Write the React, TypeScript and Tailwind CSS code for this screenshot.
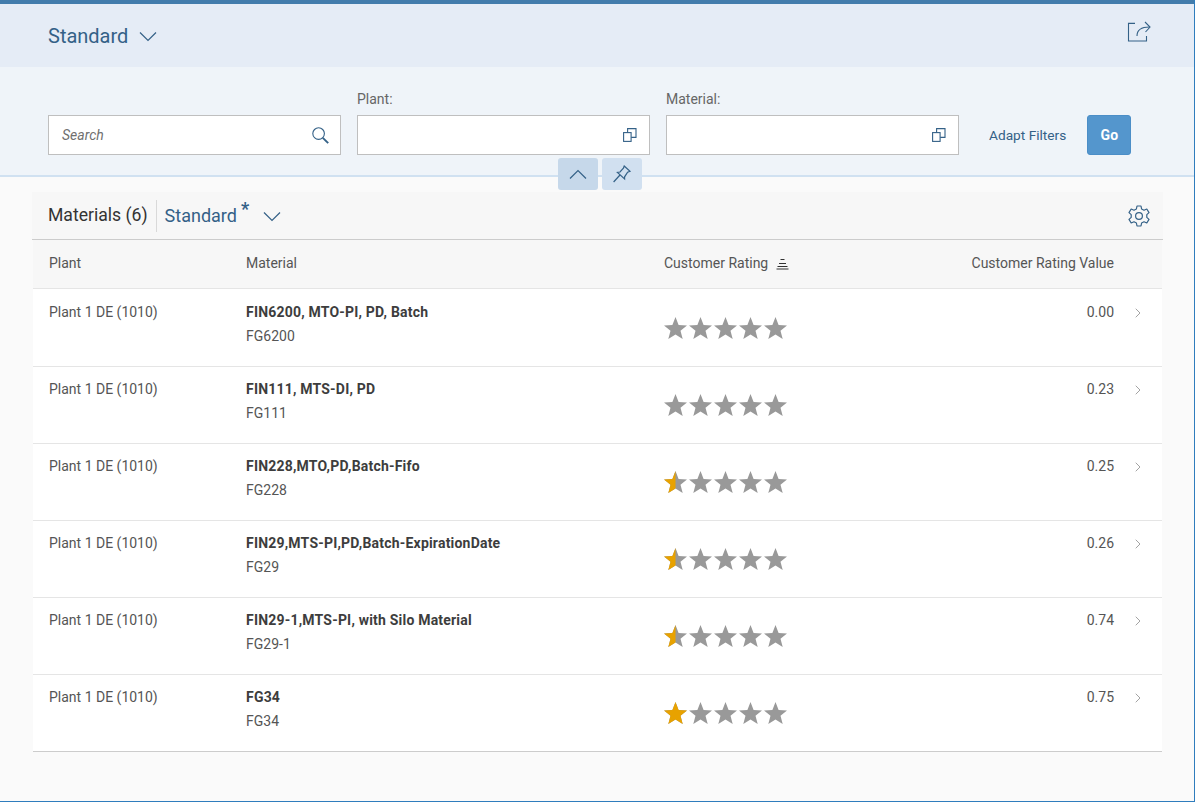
import { ChevronRight } from "lucide-react";

const rows = [
  { name: "FIN6200, MTO-PI, PD, Batch", id: "FG6200", value: "0.00", fill: 0 },
  { name: "FIN111, MTS-DI, PD", id: "FG111", value: "0.23", fill: 0 },
  { name: "FIN228,MTO,PD,Batch-Fifo", id: "FG228", value: "0.25", fill: 0.5 },
  { name: "FIN29,MTS-PI,PD,Batch-ExpirationDate", id: "FG29", value: "0.26", fill: 0.5 },
  { name: "FIN29-1,MTS-PI, with Silo Material", id: "FG29-1", value: "0.74", fill: 0.5 },
  { name: "FG34", id: "FG34", value: "0.75", fill: 1 },
];

const starPath = "M12.5 1 L15.6 9 L24 9.4 L17.5 14.8 L19.7 23 L12.5 18.4 L5.3 23 L7.5 14.8 L1 9.4 L9.4 9 Z";

function Stars({ fill }: { fill: number }) {
  return (
    <div className="flex">
      {[0, 1, 2, 3, 4].map((i) => (
        <svg key={i} width="25" height="24" viewBox="0 0 25 24">
          <path d={starPath} fill="#999999" />
          {i === 0 && fill > 0 && (
            <path
              d={fill === 1 ? starPath : "M12.5 1 L12.5 18.4 L5.3 23 L7.5 14.8 L1 9.4 L9.4 9 Z"}
              fill="#e8a200"
            />
          )}
        </svg>
      ))}
    </div>
  );
}

function Caret({ up = false }: { up?: boolean }) {
  return (
    <svg width="18" height="10" viewBox="0 0 18 10" fill="none" stroke="#346187" strokeWidth="1.2">
      <path d={up ? "M1 9.5 L9 1.5 L17 9.5" : "M1 .5 L9 8.5 L17 .5"} />
    </svg>
  );
}

function ValueHelpIcon() {
  return (
    <svg width="16" height="16" viewBox="0 0 16 16" fill="none" stroke="#346187" strokeWidth="1.1">
      <rect x="1.6" y="5.6" width="7.5" height="8.8" />
      <path d="M5.6 5.5 V1.6 H14 V10.4 H9.2" />
    </svg>
  );
}

function ValueField({ label }: { label: string }) {
  return (
    <div className="w-[293px]">
      <div className="h-[32px] pt-[5px] text-[14px] leading-[22px] text-[#666666]">{label}</div>
      <div className="flex h-[40px] items-center justify-end border border-[#bfbfbf] bg-white pr-[11px]">
        <ValueHelpIcon />
      </div>
    </div>
  );
}

export default function App() {
  return (
    <div className="flex h-[802px] w-[1195px] flex-col overflow-hidden border-r border-b border-[#2f7dbd] bg-[#fafafa] font-['Roboto',sans-serif] text-[14px] text-[#333333]">
      <div className="h-[4px] shrink-0 bg-[#427cac]" />

      {/* Variant header */}
      <div className="flex h-[63px] shrink-0 items-center justify-between bg-[#e5ecf6] pr-[43px] pl-[48px]">
        <div className="flex items-center gap-[11px] text-[#346187]">
          <span className="text-[20px] leading-[26px]">Standard</span>
          <div className="pt-[3px]">
            <Caret />
          </div>
        </div>
        <svg className="mb-[7px]" width="24" height="24" viewBox="0 0 24 24" fill="none" stroke="#346187" strokeWidth="1.1">
          <path d="M8 3.4 H1.5 V21 H19.5 V16" />
          <path d="M10 16 C10 10 14 7 22.5 7" />
          <path d="M18 2 L23 7 L18.5 12" />
        </svg>
      </div>

      {/* Filter bar */}
      <div className="relative h-[110px] shrink-0 border-b-2 border-[#d0e1f1] bg-[#eff4f9]">
        <div className="flex items-start gap-[16px] pt-[16px] pl-[48px]">
          <div className="pt-[32px]">
            <div className="flex h-[40px] w-[293px] items-center justify-between border border-[#bfbfbf] bg-white pr-[11px] pl-[13px]">
              <span className="text-[14px] text-[#707070] italic">Search</span>
              <svg width="17" height="17" viewBox="0 0 17 17" fill="none" stroke="#346187" strokeWidth="1.1">
                <circle cx="6.6" cy="6.6" r="5.8" />
                <path d="M10.8 10.8 L16.2 16.2" strokeWidth="1.9" />
              </svg>
            </div>
          </div>
          <ValueField label="Plant:" />
          <ValueField label="Material:" />
          <div className="flex h-[40px] translate-y-[32px] items-center gap-[21px] pl-[14px]">
            <span className="text-[13.7px] text-[#346187]">Adapt Filters</span>
            <div className="flex h-[40px] w-[44px] items-center justify-center rounded-[3px] border border-[#4b8ec7] bg-[#5496cd] text-[14px] font-bold text-white">
              Go
            </div>
          </div>
        </div>
        <div className="absolute top-[91px] left-[558px] flex gap-[4px]">
          <div className="flex h-[32px] w-[40px] items-center justify-center rounded-[3px] bg-[#c6d8ea]">
            <Caret up />
          </div>
          <div className="flex h-[32px] w-[40px] items-center justify-center rounded-[3px] bg-[#d1e0f0]">
            <svg width="20" height="20" viewBox="0 0 20 20" fill="none" stroke="#346187" strokeWidth="1.2">
              <path d="M12.2 2 L18 7.2 L15.6 8.2 L12.6 12.8 L12.6 15 L5.4 8.4 L8 8 L11.4 4.2 Z" />
              <path d="M8 11 L1.6 18" />
            </svg>
          </div>
        </div>
      </div>

      {/* Table */}
      <div className="mt-[15px] ml-[32px] w-[1131px]">
        <div className="flex h-[48px] items-center justify-between border-b border-[#cccccc] bg-[#f7f7f7] pr-[12px] pl-[16px]">
          <div className="flex items-center">
            <span className="pb-[1px] text-[17.6px] leading-[31px] text-[#333333]">Materials (6)</span>
            <div className="mx-[8px] h-[32px] w-px bg-[#d9d9d9]" />
            <span className="text-[18px] leading-[32px] text-[#346187]">Standard</span>
            <span className="mb-[14px] ml-[4px] text-[18px] leading-[16px] font-bold text-[#346187]">*</span>
            <div className="ml-[14px] pt-[3px]">
              <Caret />
            </div>
          </div>
          <svg width="24" height="24" viewBox="0 0 24 24" fill="none" stroke="#346187" strokeWidth="1.2">
            <circle cx="12" cy="12" r="3.4" />
            <path d="M10 2 H14 L14.6 5 L17 6.2 L19.8 5 L22 8.6 L19.8 10.6 V13.4 L22 15.4 L19.8 19 L17 17.8 L14.6 19 L14 22 H10 L9.4 19 L7 17.8 L4.2 19 L2 15.4 L4.2 13.4 V10.6 L2 8.6 L4.2 5 L7 6.2 L9.4 5 Z" strokeLinejoin="round" />
          </svg>
        </div>

        <div className="ml-px w-[1129px]">
          <div className="flex h-[49px] items-center border-b border-[#e5e5e5] bg-[#f7f7f7] pb-[1px] text-[#555555]">
            <div className="w-[213px] pl-[16px]">Plant</div>
            <div className="w-[418px]">Material</div>
            <div className="flex w-[200px] items-center gap-[8px]">
              Customer Rating
              <svg width="13" height="12" viewBox="0 0 13 12" fill="none" stroke="#333333" strokeWidth="1">
                <path d="M4.5 1.5 H8.5 M3 5.5 H10 M1.5 8.5 H11.5 M0.5 11 H12.5" />
              </svg>
            </div>
            <div className="w-[250px] text-right">Customer Rating Value</div>
          </div>
          <div className="h-px bg-white" />

          {rows.map((row) => (
            <div key={row.id} className="flex h-[77px] items-start border-b border-[#e5e5e5] bg-white last:border-[#cccccc]">
              <div className="w-[213px] pt-[13px] pl-[16px] leading-[18px] text-[#555555]">Plant 1 DE (1010)</div>
              <div className="w-[418px] pt-[13px]">
                <div className="leading-[18px] font-bold tracking-[0.2px] text-[#3d3d3d]">{row.name}</div>
                <div className="mt-[6px] leading-[18px] text-[#555555]">{row.id}</div>
              </div>
              <div className="-ml-[1px] w-[201px] pt-[26px]">
                <Stars fill={row.fill} />
              </div>
              <div className="w-[250px] pt-[13px] text-right leading-[18px] text-[#555555]">{row.value}</div>
              <div className="pt-[15px] pl-[16px]">
                <ChevronRight size={16} strokeWidth={1.2} color="#8c8c8c" />
              </div>
            </div>
          ))}
        </div>
      </div>
    </div>
  );
}
